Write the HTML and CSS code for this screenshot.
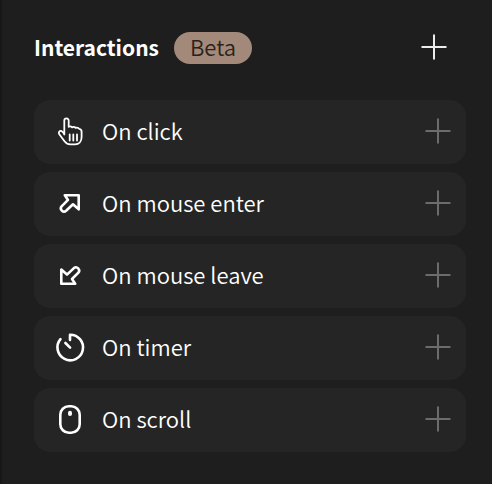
FILE: index.html
```html
<!DOCTYPE html>
<html lang="en">
<head>
<meta charset="utf-8">
<title>Interactions</title>
<link rel="stylesheet" href="styles.css">
</head>
<body>
<main class="panel">
  <header class="panel-header">
    <h1 class="title">Interactions</h1>
    <span class="badge">Beta</span>
    <button class="add add-main" type="button" aria-label="Add interaction">
      <svg class="plus" viewBox="0 0 26 26"><path d="M13 .5v25M.5 13h25"/></svg>
    </button>
  </header>
  <ul class="triggers">
    <li class="trigger">
      <svg class="icon icon-hand" viewBox="0 0 32 32"><path d="M10.3 18.5V4.6a2.2 2.2 0 0 1 4.4 0v6.2c1-.6 2.6-.4 3.4.5 1.2-.5 2.7-.3 3.5.6 1.500-.5 3 0 3.600 1 1.500.2 2.400 1.200 2.400 2.800v5.300c0 4.600-2.600 7.400-6.600 7.400h-4.500c-3 0-4.500-1.200-6-3.200L5.300 18.300c-1.300-2 .4-4 2.500-3.100 1.200.6 1.900 1.800 2.500 3.300zM15.700 18.500v6M19.300 18.500v6M23 18.500v6"/></svg>
      <span class="label">On click</span>
      <button class="add" type="button" aria-label="Add on click">
        <svg class="plus" viewBox="0 0 26 26"><path d="M13 .5v25M.5 13h25"/></svg>
      </button>
    </li>
    <li class="trigger">
      <svg class="icon" viewBox="0 0 32 32"><path d="M24.700 7.200H10.800l3.200 4.700-6.400 6.400a3.200 3.200 0 0 0 4.500 4.500l6.900-6.500 5.700 5z"/></svg>
      <span class="label">On mouse enter</span>
      <button class="add" type="button" aria-label="Add on mouse enter">
        <svg class="plus" viewBox="0 0 26 26"><path d="M13 .5v25M.5 13h25"/></svg>
      </button>
    </li>
    <li class="trigger">
      <svg class="icon" viewBox="0 0 32 32"><path d="M7.300 23.700H21.200l-3.200-4.700 6.400-6.400a3.200 3.200 0 0 0-4.500-4.500l-6.900 6.500-5.700-5z"/></svg>
      <span class="label">On mouse leave</span>
      <button class="add" type="button" aria-label="Add on mouse leave">
        <svg class="plus" viewBox="0 0 26 26"><path d="M13 .5v25M.5 13h25"/></svg>
      </button>
    </li>
    <li class="trigger">
      <svg class="icon" viewBox="0 0 32 32"><path d="M16 8V2.700A12.800 12.800 0 1 1 6.500 7.200M11.400 11l4.700 4.600"/></svg>
      <span class="label">On timer</span>
      <button class="add" type="button" aria-label="Add on timer">
        <svg class="plus" viewBox="0 0 26 26"><path d="M13 .5v25M.5 13h25"/></svg>
      </button>
    </li>
    <li class="trigger">
      <svg class="icon" viewBox="0 0 32 32"><rect x="6.300" y="2.300" width="19.400" height="26.400" rx="8.500"/><path class="wheel" d="M16 8.700v1.200"/></svg>
      <span class="label">On scroll</span>
      <button class="add" type="button" aria-label="Add on scroll">
        <svg class="plus" viewBox="0 0 26 26"><path d="M13 .5v25M.5 13h25"/></svg>
      </button>
    </li>
  </ul>
</main>
</body>
</html>
```
FILE: styles.css
```css
* {
  box-sizing: border-box;
}

body {
  margin: 0;
  background: #1e1e1e;
  color: #fff;
  font-family: "Noto Sans CJK SC", "Noto Sans", sans-serif;
  font-size: 22px;
  font-weight: 350;
  line-height: 28px;
}

.panel {
  min-height: 100vh;
  padding: 32px 26px 32px 32px;
  border-left: 2px solid #171717;
  border-bottom: 1px solid #181416;
}

.panel-header {
  display: flex;
  align-items: center;
  gap: 15px;
  padding-right: 19px;
}

.title {
  margin: 0;
  padding-bottom: 2px;
  font-size: 21px;
  font-weight: 700;
}

.badge {
  padding: 0 16px 4px;
  border-radius: 16px;
  background: #a38979;
  color: #2b211c;
}

.label {
  padding-bottom: 4px;
}

.add {
  display: flex;
  margin: 0 0 3px auto;
  padding: 0;
  border: 0;
  background: none;
  color: #6c6c6c;
}

.add-main {
  color: #ececec;
}

.plus {
  width: 26px;
  height: 26px;
  fill: none;
  stroke: currentColor;
  stroke-width: 2;
}

.triggers {
  display: grid;
  gap: 8px;
  margin: 36px 0 0;
  padding: 0;
  list-style: none;
}

.trigger {
  display: flex;
  align-items: center;
  gap: 16px;
  height: 64px;
  padding: 0 15px 0 20px;
  border-radius: 16px;
  background: #252525;
}

.icon {
  width: 32px;
  height: 32px;
  fill: none;
  stroke: #fff;
  stroke-width: 2.6;
  stroke-linejoin: round;
  stroke-linecap: round;
}

.icon-hand {
  stroke-width: 1.8;
}

.wheel {
  stroke-width: 4;
}
```
